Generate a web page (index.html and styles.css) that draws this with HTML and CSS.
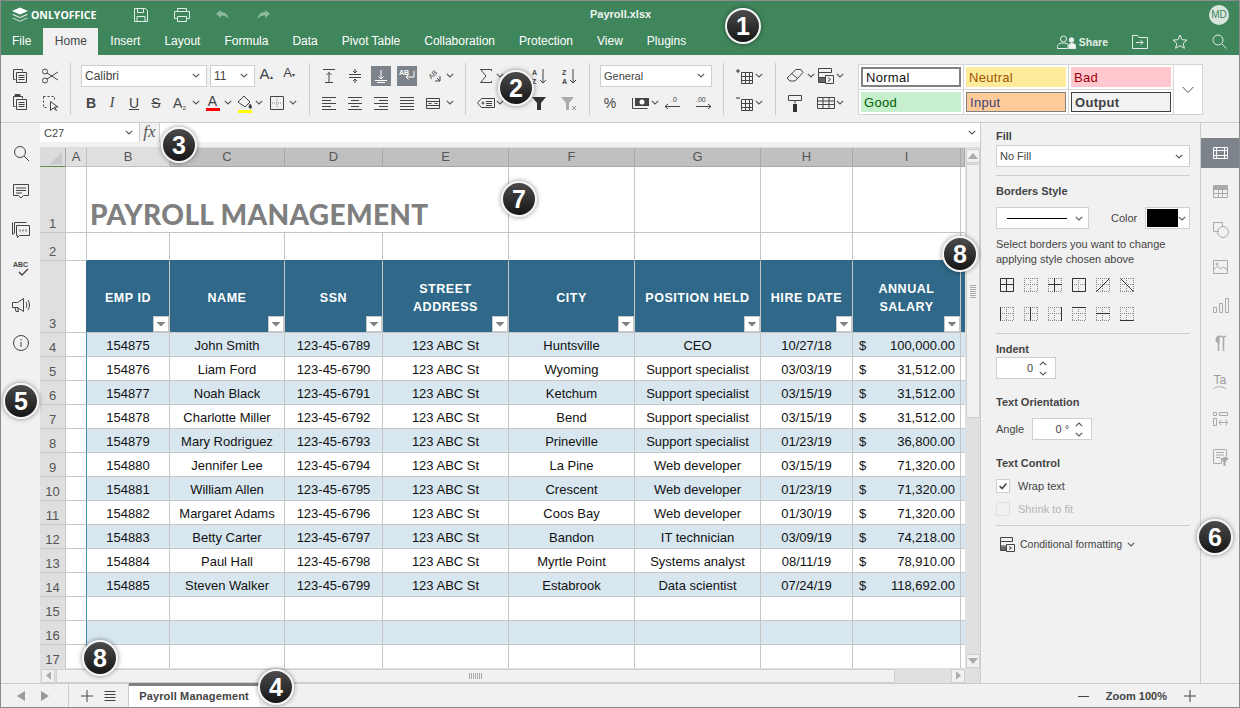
FILE: index.html
```html
<!DOCTYPE html>
<html lang="en">
<head>
  <meta charset="UTF-8">
  <title>Payroll.xlsx</title>
  <link rel="stylesheet" href="styles.css">
</head>
<body>

<!-- shared icon parts -->
<svg class="defs" aria-hidden="true">
  <symbol id="chev" viewBox="0 0 8 5"><path d="M.8 .8 4 4 7.2 .8" fill="none" stroke="#555" stroke-width="1.1"/></symbol>
  <symbol id="dots" viewBox="0 0 14 14"><path d="M0 .5h14M0 13.500h14M.5 0v14M13.500 0v14M6.500 0v14M0 6.500h14" fill="none" stroke="#8a8a8a" stroke-dasharray="1 1"/></symbol>
  <symbol id="tri-up" viewBox="0 0 10 6"><path d="M5 0l5 6H0z" fill="#aaa"/></symbol>
  <symbol id="tri-down" viewBox="0 0 10 6"><path d="M0 0h10L5 6z" fill="#aaa"/></symbol>
  <symbol id="filter" viewBox="0 0 16 16"><rect x=".5" y=".5" width="15" height="15" fill="#fff" stroke="#c6c6c6"/><path d="M3.500 6h9L8 10.500z" fill="#808080"/></symbol>
</svg>

<div class="app">

  <!-- Title bar -->
  <header class="topbar">
    <div class="title-row">
      <svg class="logo" viewBox="0 0 18 16"><path d="M9 .5l8 3.5-8 3.5L1 4z" fill="#fff"/><path d="M2.500 7 9 10l6.500-3 1.500.8L9 11.300 1 7.800z" fill="#d5e5db"/><path d="M2.500 10.500 9 13.500l6.500-3 1.500.8L9 15 1 11.300z" fill="#a9cbb6"/></svg>
      <span class="brand">ONLYOFFICE</span>
      <svg class="ic-top save" viewBox="0 0 16 16"><path d="M1.500 1.500h11l2 2v11h-13zM4.500 1.500v4h6v-4M4 14.500v-5h8v5" /></svg>
      <svg class="ic-top print" viewBox="0 0 18 16"><path d="M4.500 4.500v-3h9v3M4.500 11.500h-3v-7h15v7h-3M4.500 9.500h9v5h-9z"/></svg>
      <svg class="ic-top undo off" viewBox="0 0 16 12"><path d="M6 1 1 5l5 4V6.500c3 0 5.500 1 7.500 3.500-.5-4.500-3.500-7-7.500-7z" fill="#cfe0d5"/></svg>
      <svg class="ic-top redo off" viewBox="0 0 16 12"><path d="M10 1l5 4-5 4V6.500c-3 0-5.500 1-7.500 3.500.5-4.500 3.500-7 7.500-7z" fill="#cfe0d5"/></svg>
      <span class="doc-title">Payroll.xlsx</span>
      <span class="avatar">MD</span>
    </div>
    <div class="tab-row">
      <nav class="tabs">
        <a>File</a><a class="on">Home</a><a>Insert</a><a>Layout</a><a>Formula</a><a>Data</a><a>Pivot Table</a><a>Collaboration</a><a>Protection</a><a>View</a><a>Plugins</a>
      </nav>
      <div class="top-actions">
        <svg class="ic-top share-ic" viewBox="0 0 20 14"><circle cx="6.500" cy="4" r="3"/><path d="M.5 13.500v-2c0-2 2-3.500 6-3.500 2 0 3.500.5 4.500 1.500v4z"/><circle cx="14.500" cy="5" r="2.300" fill="#eef4f0"/><path d="M12 13.500v-3.500c0-1 1-1.500 2.500-1.500h1c2 0 3 1 3 2.500v2.500z" fill="#eef4f0"/></svg>
        <span class="share">Share</span>
        <svg class="ic-top move" viewBox="0 0 16 14"><path d="M.5 13.500v-13h5l1.500 2h8.500v11zM4 7.500h7M8.500 5l2.500 2.500L8.500 10"/></svg>
        <svg class="ic-top star" viewBox="0 0 16 15"><path d="M8 1l2 4.700 5 .4-3.800 3.300 1.200 4.900L8 11.700l-4.400 2.600 1.200-4.900L1 6.100l5-.4z"/></svg>
        <svg class="ic-top find" viewBox="0 0 15 15"><circle cx="6" cy="6" r="5"/><path d="M9.800 9.800l4.700 4.700"/></svg>
      </div>
    </div>
  </header>

  <!-- Ribbon -->
  <section class="ribbon">
    <div class="group g1">
      <div class="row">
        <span class="tool w30"><svg class="ic" viewBox="0 0 20 20"><path d="M3.500 3.500h9v2M3.500 3.500v10h2M6.500 6.500h10v10h-10zM8.500 9.500h6M8.500 11.500h6M8.500 13.500h6"/></svg></span>
        <span class="tool w30"><svg class="ic" viewBox="0 0 20 20"><circle cx="5" cy="5.500" r="2.500"/><circle cx="5" cy="14.500" r="2.500"/><path d="M7 7l11 7M7 13l11-7"/></svg></span>
      </div>
      <div class="row">
        <span class="tool w30"><svg class="ic" viewBox="0 0 20 20"><path d="M3.500 3.500h9v2M3.500 3.500v10h2M6.500 6.500h10v10h-10zM8.500 9.500h6M8.500 11.500h6M8.500 13.500h6"/><path d="M5 1.500h5v2H5z" fill="#444"/></svg></span>
        <span class="tool w30"><svg class="ic" viewBox="0 0 20 20"><path d="M3.500 3.500h11v5M3.500 3.500v11h5" stroke-dasharray="2 2"/><path d="M10.500 8.500l0 9 2.500-2.500 3.500 2.500-2-3.500h3.500z"/></svg></span>
      </div>
    </div>
    <i class="sep"></i>

    <div class="group g2">
      <div class="row">
        <div class="select font-name"><span>Calibri</span><svg class="chev"><use href="#chev"/></svg></div>
        <div class="select font-size"><span>11</span><svg class="chev"><use href="#chev"/></svg></div>
        <span class="tool w22 grow">A<sup>▴</sup></span>
        <span class="tool w22 ml1 shrink">A<sup>▾</sup></span>
      </div>
      <div class="row">
        <span class="tool w20 fmt bold">B</span>
        <span class="tool w22 fmt ital">I</span>
        <span class="tool w22 fmt und">U</span>
        <span class="tool w22 fmt strike">S</span>
        <span class="tool w25 fmt">A<small>₂</small></span><svg class="chev"><use href="#chev"/></svg>
        <span class="tool w23 ml1 fmt"><b class="color-a red">A</b></span><svg class="chev"><use href="#chev"/></svg>
        <span class="tool w20 ml3"><svg class="ic" viewBox="0 0 20 20"><path d="M3 9l6-6 6 6-5 5z"/><path d="M15 11c1 1.500 1.500 2 1.500 3a1.200 1.200 0 0 1-2.500 0c0-1 .5-1.500 1-3z" fill="#444"/><rect x="3" y="17" width="14" height="3" fill="#ff0" stroke="none"/></svg></span><svg class="chev"><use href="#chev"/></svg>
        <span class="tool w24 ml2"><svg class="ic" viewBox="0 0 20 20"><path d="M3.500 3.500h13v13h-13z"/><path d="M10 5v10M5 10h10" stroke="#888" stroke-dasharray="1 1"/></svg></span><svg class="chev"><use href="#chev"/></svg>
      </div>
    </div>
    <i class="sep"></i>

    <div class="group g3">
      <div class="row">
        <span class="tool w26"><svg class="ic" viewBox="0 0 20 20"><path d="M4 3.500h12M10 16V6.500M7.500 9 10 6.500 12.500 9M6 16.500h8" /></svg></span>
        <span class="tool w26"><svg class="ic" viewBox="0 0 20 20"><path d="M4 8.500h12M4 11.500h12M10 3v4M8 5l2 2 2-2M10 17v-4M8 15l2-2 2 2"/></svg></span>
        <span class="tool w26"><span class="active"><svg class="ic wht" viewBox="0 0 20 20"><path d="M10 4v9M7.500 10.500 10 13l2.500-2.500M4 14.500h12M6 16.500h8"/></svg></span></span>
        <span class="tool w26"><span class="active"><svg class="ic wht" viewBox="0 0 20 20"><text x="2" y="9" class="mini wt">AB</text><path d="M17 5v6h-8M11.500 8.500 9 11l2.500 2.500"/></svg></span></span>
        <span class="tool w26"><svg class="ic" viewBox="0 0 20 20"><text x="6" y="12" class="mini" transform="rotate(-45 9 10)">AB</text><path d="M12 15h5v-5M17 15l-3-3"/></svg></span><svg class="chev"><use href="#chev"/></svg>
      </div>
      <div class="row">
        <span class="tool w26"><svg class="ic" viewBox="0 0 20 20"><path d="M3 4.500h14M3 7.500h9M3 10.500h14M3 13.500h9M3 16.500h14"/></svg></span>
        <span class="tool w26"><svg class="ic" viewBox="0 0 20 20"><path d="M3 4.500h14M6 7.500h8M3 10.500h14M6 13.500h8M3 16.500h14"/></svg></span>
        <span class="tool w26"><svg class="ic" viewBox="0 0 20 20"><path d="M3 4.500h14M8 7.500h9M3 10.500h14M8 13.500h9M3 16.500h14"/></svg></span>
        <span class="tool w26"><svg class="ic" viewBox="0 0 20 20"><path d="M3 4.500h14M3 7.500h14M3 10.500h14M3 13.500h14M3 16.500h14"/></svg></span>
        <span class="tool w26"><svg class="ic" viewBox="0 0 20 20"><path d="M3.500 5.500h13v10h-13zM3.500 8.500h13M3.500 12.500h13M5.500 10.500h3M11.500 10.500h3"/></svg></span><svg class="chev"><use href="#chev"/></svg>
      </div>
    </div>
    <i class="sep"></i>

    <div class="group g4">
      <div class="row">
        <span class="tool w20"><svg class="ic" viewBox="0 0 20 20"><path d="M15.500 5V3.500h-11L10 10l-5.500 6.500h11V15"/></svg></span><svg class="chev"><use href="#chev"/></svg>
        <span class="tool w20 ml25"><svg class="ic" viewBox="0 0 20 20"><text x="3" y="9" class="mini bd">A</text><text x="3" y="18" class="mini bd">Z</text><path d="M14 3v14M11 14l3 3 3-3"/></svg></span>
        <span class="tool w20 ml10"><svg class="ic" viewBox="0 0 20 20"><text x="3" y="9" class="mini bd">Z</text><text x="3" y="18" class="mini bd">A</text><path d="M14 3v14M11 14l3 3 3-3"/></svg></span>
      </div>
      <div class="row">
        <span class="tool w20"><svg class="ic" viewBox="0 0 20 20"><path d="M5.500 5.500h13v9h-13L1.500 10z"/><path d="M10 8.500h6M10 10.500h6M10 12.500h6"/><circle cx="7" cy="10" r="1"/></svg></span><svg class="chev"><use href="#chev"/></svg>
        <span class="tool w20 ml25"><svg class="ic" viewBox="0 0 20 20"><path d="M3 4h14l-5 6v7h-4v-7z" fill="#333" stroke="none"/></svg></span>
        <span class="tool w20 ml10"><svg class="ic" viewBox="0 0 20 20"><path d="M2 4h13l-5 6v7H7v-7z" fill="#aaa" stroke="none"/><path d="M13 13l4 4M17 13l-4 4" stroke="#999"/></svg></span>
      </div>
    </div>
    <i class="sep"></i>

    <div class="group g5">
      <div class="row">
        <div class="select fmt-general"><span>General</span><svg class="chev"><use href="#chev"/></svg></div>
      </div>
      <div class="row">
        <span class="tool w20 pct">%</span>
        <span class="tool w20 ml10"><svg class="ic" viewBox="0 0 20 20"><rect x="5" y="5" width="14" height="8" fill="#444" stroke="none"/><circle cx="12" cy="9" r="2.500" fill="#fff" stroke="none"/><path d="M2.500 5v10.500h15"/></svg></span><svg class="chev ml1"><use href="#chev"/></svg>
        <span class="tool w20 ml3"><svg class="ic" viewBox="0 0 20 20"><text x="9" y="9" class="mini">.0</text><path d="M18 13.500H3M6 11l-3 2.500L6 16"/></svg></span>
        <span class="tool w20 ml11"><svg class="ic" viewBox="0 0 20 20"><text x="3" y="9" class="mini">.00</text><path d="M3 13.500h15M15 11l3 2.500L15 16"/></svg></span>
      </div>
    </div>
    <i class="sep"></i>

    <div class="group g6">
      <div class="row">
        <span class="tool w20"><svg class="ic" viewBox="0 0 20 20"><path d="M3 3v4M1 5h4" stroke="#333"/><path d="M6.500 6.500h11v11h-11zM6.500 10.500h11M6.500 14.500h11M10.500 6.500v11M14.500 6.500v11"/></svg></span><svg class="chev"><use href="#chev"/></svg>
      </div>
      <div class="row">
        <span class="tool w20"><svg class="ic" viewBox="0 0 20 20"><path d="M1 5h4" stroke="#333"/><path d="M6.500 6.500h11v11h-11zM6.500 10.500h11M6.500 14.500h11M10.500 6.500v11M14.500 6.500v11"/></svg></span><svg class="chev"><use href="#chev"/></svg>
      </div>
    </div>
    <i class="sep"></i>

    <div class="group g7">
      <div class="row">
        <span class="tool w20"><svg class="ic" viewBox="0 0 20 20"><path d="M2 12 11 3.500h5l2 3-8 8.500H5zM6.500 7.500l6 5"/></svg></span><svg class="chev ml2"><use href="#chev"/></svg>
        <span class="tool w20 ml1"><svg class="ic" viewBox="0 0 20 20"><path d="M2.500 2.500h13v4h-13zM2.500 6.500v10h7M2.500 11.500h7"/><rect x="3" y="12" width="6" height="4" fill="#666" stroke="none"/><path d="M9.500 9.500h8v8h-8zM12 11.500l2.500 2-2.500 2"/></svg></span><svg class="chev"><use href="#chev"/></svg>
      </div>
      <div class="row">
        <span class="tool w20"><svg class="ic" viewBox="0 0 20 20"><path d="M3.500 2.500h13v5h-13zM10 7.500v3"/><rect x="8" y="11" width="4" height="8" fill="#333" stroke="none"/></svg></span>
        <span class="tool w20 ml11"><svg class="ic" viewBox="0 0 20 20"><path d="M1.500 4.500h17v11h-17zM1.500 8h17M1.500 11.500h17M7 4.500v11M13 4.500v11"/></svg></span><svg class="chev"><use href="#chev"/></svg>
      </div>
    </div>

    <div class="gallery">
      <div class="style"><span class="st-normal">Normal</span></div>
      <div class="style"><span class="st-neutral">Neutral</span></div>
      <div class="style"><span class="st-bad">Bad</span></div>
      <div class="more"><svg viewBox="0 0 12 8"><path d="M.7 1 6 6.500 11.300 1" fill="none" stroke="#555"/></svg></div>
      <div class="style"><span class="st-good">Good</span></div>
      <div class="style"><span class="st-input">Input</span></div>
      <div class="style"><span class="st-output">Output</span></div>
    </div>
  </section>

  <div class="main">

    <!-- Left toolbar -->
    <aside class="sidebar left">
      <svg class="ic" viewBox="0 0 20 20"><circle cx="9" cy="9" r="5.500"/><path d="M13 13l5 5"/></svg>
      <svg class="ic" viewBox="0 0 20 20"><path d="M2.500 3.500h15v11h-5L10 17l-2.500-2.500h-5zM5 7h10M5 9.500h10M5 12h6"/></svg>
      <svg class="ic" viewBox="0 0 20 20"><path d="M3.500 14V3.500h12M1.500 3.500v12l2-1.500"/><path d="M5.500 6.500h13v10h-10l-2 2v-2h-1z"/><path d="M8.500 11.500h1M11.500 11.500h1M14.500 11.500h1" stroke-width="2"/></svg>
      <svg class="ic" viewBox="0 0 20 20"><text x="2" y="10" class="mini bd">ABC</text><path d="M8 15l3 3 6-6" stroke-width="1.400"/></svg>
      <svg class="ic" viewBox="0 0 20 20"><path d="M1.500 7.500h5l6-4v13l-6-4h-5zM4 12.500l1 4h2.500l-1-4M15 7c1 2 1 4 0 6M17 5c2 3 2 7 0 10"/></svg>
      <svg class="ic" viewBox="0 0 20 20"><circle cx="10" cy="10" r="7.500"/><path d="M10 9v5M10 6v1.500"/></svg>
    </aside>

    <!-- Sheet -->
    <div class="center">
      <div class="formula">
        <div class="name-box"><span>C27</span><svg class="chev"><use href="#chev"/></svg></div>
        <div class="fx">fx</div>
        <div class="fx-input"><svg class="chev"><use href="#chev"/></svg></div>
      </div>

      <div class="sheet-wrap">
        <div class="sheet-col">
          <div class="sheet">
            <table>
              <colgroup>
                <col class="c-h"><col class="c-a"><col class="c-b"><col class="c-c"><col class="c-d"><col class="c-e"><col class="c-f"><col class="c-g"><col class="c-h2"><col class="c-i"><col class="c-j">
              </colgroup>
              <tr class="cols">
                <th class="corner"><svg viewBox="0 0 12 12"><path d="M12 0v12H0z" fill="#c8c8c8"/></svg></th>
                <th class="lite">A</th><th class="lite">B</th><th>C</th><th>D</th><th>E</th><th>F</th><th>G</th><th>H</th><th>I</th><th></th>
              </tr>
              <tr class="r-title">
                <th class="num">1</th><td></td>
                <td colspan="4" class="title">PAYROLL MANAGEMENT</td>
                <td></td><td></td><td></td><td></td><td></td>
              </tr>
              <tr class="r-gap">
                <th class="num">2</th><td></td><td></td><td></td><td></td><td></td><td></td><td></td><td></td><td></td><td></td>
              </tr>
              <tr class="r-head">
                <th class="num">3</th><td></td>
                <td class="hd">EMP ID<svg class="flt"><use href="#filter"/></svg></td>
                <td class="hd">NAME<svg class="flt"><use href="#filter"/></svg></td>
                <td class="hd">SSN<svg class="flt"><use href="#filter"/></svg></td>
                <td class="hd">STREET<br>ADDRESS<svg class="flt"><use href="#filter"/></svg></td>
                <td class="hd">CITY<svg class="flt"><use href="#filter"/></svg></td>
                <td class="hd">POSITION HELD<svg class="flt"><use href="#filter"/></svg></td>
                <td class="hd">HIRE DATE<svg class="flt"><use href="#filter"/></svg></td>
                <td class="hd">ANNUAL<br>SALARY<svg class="flt"><use href="#filter"/></svg></td>
                <td class="hd-end"></td>
              </tr>
              <tr class="odd"><th class="num">4</th><td></td><td>154875</td><td>John Smith</td><td>123-45-6789</td><td>123 ABC St</td><td>Huntsville</td><td>CEO</td><td>10/27/18</td><td class="money"><div><span>$</span><span>100,000.00</span></div></td><td></td></tr>
              <tr><th class="num">5</th><td></td><td>154876</td><td>Liam Ford</td><td>123-45-6790</td><td>123 ABC St</td><td>Wyoming</td><td>Support specialist</td><td>03/03/19</td><td class="money"><div><span>$</span><span>31,512.00</span></div></td><td></td></tr>
              <tr class="odd"><th class="num">6</th><td></td><td>154877</td><td>Noah Black</td><td>123-45-6791</td><td>123 ABC St</td><td>Ketchum</td><td>Support specialist</td><td>03/15/19</td><td class="money"><div><span>$</span><span>31,512.00</span></div></td><td></td></tr>
              <tr><th class="num">7</th><td></td><td>154878</td><td>Charlotte Miller</td><td>123-45-6792</td><td>123 ABC St</td><td>Bend</td><td>Support specialist</td><td>03/15/19</td><td class="money"><div><span>$</span><span>31,512.00</span></div></td><td></td></tr>
              <tr class="odd"><th class="num">8</th><td></td><td>154879</td><td>Mary Rodriguez</td><td>123-45-6793</td><td>123 ABC St</td><td>Prineville</td><td>Support specialist</td><td>01/23/19</td><td class="money"><div><span>$</span><span>36,800.00</span></div></td><td></td></tr>
              <tr><th class="num">9</th><td></td><td>154880</td><td>Jennifer Lee</td><td>123-45-6794</td><td>123 ABC St</td><td>La Pine</td><td>Web developer</td><td>03/15/19</td><td class="money"><div><span>$</span><span>71,320.00</span></div></td><td></td></tr>
              <tr class="odd"><th class="num">10</th><td></td><td>154881</td><td>William Allen</td><td>123-45-6795</td><td>123 ABC St</td><td>Crescent</td><td>Web developer</td><td>01/23/19</td><td class="money"><div><span>$</span><span>71,320.00</span></div></td><td></td></tr>
              <tr><th class="num">11</th><td></td><td>154882</td><td>Margaret Adams</td><td>123-45-6796</td><td>123 ABC St</td><td>Coos Bay</td><td>Web developer</td><td>01/30/19</td><td class="money"><div><span>$</span><span>71,320.00</span></div></td><td></td></tr>
              <tr class="odd"><th class="num">12</th><td></td><td>154883</td><td>Betty Carter</td><td>123-45-6797</td><td>123 ABC St</td><td>Bandon</td><td>IT technician</td><td>03/09/19</td><td class="money"><div><span>$</span><span>74,218.00</span></div></td><td></td></tr>
              <tr><th class="num">13</th><td></td><td>154884</td><td>Paul Hall</td><td>123-45-6798</td><td>123 ABC St</td><td>Myrtle Point</td><td>Systems analyst</td><td>08/11/19</td><td class="money"><div><span>$</span><span>78,910.00</span></div></td><td></td></tr>
              <tr class="odd"><th class="num">14</th><td></td><td>154885</td><td>Steven Walker</td><td>123-45-6799</td><td>123 ABC St</td><td>Estabrook</td><td>Data scientist</td><td>07/24/19</td><td class="money"><div><span>$</span><span>118,692.00</span></div></td><td></td></tr>
              <tr><th class="num">15</th><td></td><td></td><td></td><td></td><td></td><td></td><td></td><td></td><td></td><td></td></tr>
              <tr class="odd"><th class="num">16</th><td></td><td></td><td></td><td></td><td></td><td></td><td></td><td></td><td></td><td></td></tr>
              <tr><th class="num">17</th><td></td><td></td><td></td><td></td><td></td><td></td><td></td><td></td><td></td><td></td></tr>
            </table>
          </div>
          <div class="hscroll">
            <span class="sb-btn"><svg class="tri-l" viewBox="0 0 6 10"><path d="M6 0v10L0 5z" fill="#aaa"/></svg></span>
            <span class="hthumb"><i class="grip-h"></i></span>
            <span class="sb-btn"><svg class="tri-l" viewBox="0 0 6 10"><path d="M0 0v10l6-5z" fill="#aaa"/></svg></span>
          </div>
        </div>
        <div class="vscroll">
          <span class="sb-btn"><svg class="tri-v"><use href="#tri-up"/></svg></span>
          <span class="vthumb"><i class="grip-v"></i></span>
          <span class="sb-btn down"><svg class="tri-v"><use href="#tri-down"/></svg></span>
        </div>
      </div>
    </div>

    <!-- Cell settings -->
    <aside class="panel">
      <h4 class="lbl first">Fill</h4>
      <div class="select p-fill"><span>No Fill</span><svg class="chev"><use href="#chev"/></svg></div>
      <hr class="m8">

      <h4 class="lbl m9">Borders Style</h4>
      <div class="border-row">
        <div class="select p-line"><i class="line"></i><svg class="chev"><use href="#chev"/></svg></div>
        <span class="color-lbl">Color</span>
        <div class="select p-color"><i class="swatch"></i><svg class="chev"><use href="#chev"/></svg></div>
      </div>
      <p class="hint">Select borders you want to change applying style chosen above</p>

      <div class="border-icons first-row">
        <span><svg viewBox="0 0 14 14"><path d="M.5 .5h13v13H.5zM6.500 .5v13M.5 6.500h13"/></svg></span>
        <span><svg viewBox="0 0 14 14"><use href="#dots"/></svg></span>
        <span><svg viewBox="0 0 14 14"><use href="#dots"/><path d="M6.500 0v14M0 6.500h14"/></svg></span>
        <span><svg viewBox="0 0 14 14"><use href="#dots"/><path d="M.5 .5h13v13H.5z"/></svg></span>
        <span><svg viewBox="0 0 14 14"><use href="#dots"/><path d="M.5 13.500l13-13"/></svg></span>
        <span><svg viewBox="0 0 14 14"><use href="#dots"/><path d="M.5 .5l13 13"/></svg></span>
      </div>
      <div class="border-icons">
        <span><svg viewBox="0 0 14 14"><use href="#dots"/><path d="M.5 0v14"/></svg></span>
        <span><svg viewBox="0 0 14 14"><use href="#dots"/><path d="M6.500 0v14"/></svg></span>
        <span><svg viewBox="0 0 14 14"><use href="#dots"/><path d="M13.500 0v14"/></svg></span>
        <span><svg viewBox="0 0 14 14"><use href="#dots"/><path d="M0 .5h14"/></svg></span>
        <span><svg viewBox="0 0 14 14"><use href="#dots"/><path d="M0 6.500h14"/></svg></span>
        <span><svg viewBox="0 0 14 14"><use href="#dots"/><path d="M0 13.500h14"/></svg></span>
      </div>
      <hr class="m9">

      <h4 class="lbl m9">Indent</h4>
      <div class="spin indent"><span>0</span><em><svg class="chev up"><use href="#chev"/></svg><svg class="chev"><use href="#chev"/></svg></em></div>

      <h4 class="lbl m17">Text Orientation</h4>
      <div class="angle-row">
        <span>Angle</span>
        <div class="spin angle"><span>0 °</span><em><svg class="chev up"><use href="#chev"/></svg><svg class="chev"><use href="#chev"/></svg></em></div>
      </div>

      <h4 class="lbl m17">Text Control</h4>
      <div class="check m9"><i class="box"><svg viewBox="0 0 14 14"><path d="M3 7l3 3 5-6" fill="none" stroke="#444" stroke-width="1.800"/></svg></i>Wrap text</div>
      <div class="check off m9"><i class="box"></i>Shrink to fit</div>
      <hr class="m9">

      <div class="cond">
        <svg class="ic" viewBox="0 0 20 20"><path d="M3.500 3.500h12v4h-12zM3.500 7.500v9h6M3.500 12h6"/><rect x="4" y="12.500" width="5" height="3.500" fill="#666" stroke="none"/><path d="M9.500 10.500h8v7h-8zM12 12.500l2.500 1.500-2.500 1.500"/></svg>
        <span>Conditional formatting</span>
        <svg class="chev"><use href="#chev"/></svg>
      </div>
    </aside>

    <!-- Right toolbar -->
    <aside class="sidebar right">
      <span class="rt on"><svg class="ic wht" viewBox="0 0 20 20"><path d="M3.500 4.500h14v11h-14zM3.500 7.500h14M3.500 12.500h14M6.500 4.500v11M14.500 4.500v11"/></svg></span>
      <span class="rt"><svg class="ic" viewBox="0 0 20 20"><path d="M3.500 4.500h14v12h-14zM3.500 8.500h14M3.500 12.500h14M8.500 4.500v12M12.500 4.500v12"/><path d="M3.500 5.500h14v3h-14z" fill="#aaa"/></svg></span>
      <span class="rt"><svg class="ic" viewBox="0 0 20 20"><path d="M9 12.500H3.500v-9h9V8"/><circle cx="13" cy="13" r="5.500"/></svg></span>
      <span class="rt"><svg class="ic" viewBox="0 0 20 20"><path d="M3.500 3.500h14v13h-14zM3.500 13l4-4 3 3 3-2 4 3"/><circle cx="7" cy="7" r="1"/></svg></span>
      <span class="rt"><svg class="ic" viewBox="0 0 20 20"><path d="M3.500 12.500h3v5h-3zM9.500 8.500h3v9h-3zM15.500 3.500h3v14h-3z"/></svg></span>
      <span class="rt"><svg class="ic" viewBox="0 0 20 20"><path d="M8.500 18V3.500h5M13.500 3.500V18M16 3.500h-2" stroke-width="1.600"/><path d="M9 3H8a4 4 0 0 0 0 7h1z" fill="#aaa"/></svg></span>
      <span class="rt"><svg class="ic" viewBox="0 0 20 20"><text x="3.500" y="13" class="mini big">Ta</text><path d="M3 18c3-3 9-3 13 0"/></svg></span>
      <span class="rt"><svg class="ic" viewBox="0 0 20 20"><path d="M3.500 3.500h3v3h-3zM9.500 3.500h8v3h-8zM3.500 9.500h3v7h-3zM9 13.500h9M15.500 10.500l2 3-2 3M11 11l-2 2.500 2 2.500"/></svg></span>
      <span class="rt"><svg class="ic" viewBox="0 0 20 20"><path d="M3.500 2.500h13v8h-3l-2 2v4h-8zM6 5.500h8M6 8h8M6 10.500h4"/><path d="M10 11h9l-3.500 4v4h-2v-4z" fill="#aaa" stroke="none"/></svg></span>
    </aside>
  </div>

  <!-- Status bar -->
  <footer class="status">
    <div class="nav-arrows">
      <svg viewBox="0 0 8 10"><path d="M8 0v10L0 5z" fill="#999"/></svg>
      <svg viewBox="0 0 8 10"><path d="M0 0v10l8-5z" fill="#999"/></svg>
    </div>
    <div class="sheet-tools">
      <svg class="ic" viewBox="0 0 14 14"><path d="M7 1v12M1 7h12"/></svg>
      <svg class="ic" viewBox="0 0 14 14"><path d="M1.500 2.500h11M1.500 5.500h11M1.500 8.500h11M1.500 11.500h11"/></svg>
    </div>
    <div class="sheet-tab">Payroll Management</div>
    <div class="zoom">
      <svg class="ic" viewBox="0 0 14 14"><path d="M1 7.500h11"/></svg>
      <span>Zoom 100%</span>
      <svg class="ic" viewBox="0 0 14 14"><path d="M7 1v12M1 7h12"/></svg>
    </div>
  </footer>

  <!-- Callout badges -->
  <span class="badge b1">1</span>
  <span class="badge b2">2</span>
  <span class="badge b3">3</span>
  <span class="badge b4">4</span>
  <span class="badge b5">5</span>
  <span class="badge b6">6</span>
  <span class="badge b7">7</span>
  <span class="badge b8a">8</span>
  <span class="badge b8b">8</span>
</div>

</body>
</html>
```

FILE: styles.css
```css
* {
  box-sizing: border-box;
}

body {
  margin: 0;
  font-family: "Liberation Sans", Arial, sans-serif;
  font-size: 11px;
  color: #444;
  overflow: hidden;
}

.defs {
  position: absolute;
  width: 0;
  height: 0;
}

.app {
  position: relative;
  width: 1240px;
  height: 708px;
  border: 1px solid #8c8c8c;
  background: #f1f1f1;
  display: flex;
  flex-direction: column;
  overflow: hidden;
}

/* Title bar */
.topbar {
  background: #40865c;
  color: #fff;
  height: 54px;
  flex: none;
}

.title-row {
  height: 27px;
  display: flex;
  align-items: center;
  position: relative;
  padding-left: 10px;
}

.logo {
  width: 18px;
  height: 16px;
}

.brand {
  font-family: "Open Sans", sans-serif;
  font-weight: 700;
  font-size: 10.500px;
  margin-left: 2px;
  width: 67px;
  white-space: nowrap;
}

.ic-top {
  fill: none;
  stroke: #e3eee7;
  stroke-width: 1;
  flex: none;
}

.save {
  width: 16px;
  height: 16px;
  margin-left: 35px;
}

.print {
  width: 18px;
  height: 16px;
  margin-left: 24px;
}

.undo {
  width: 16px;
  height: 12px;
  margin-left: 24px;
  stroke: none;
  opacity: .55;
}

.redo {
  width: 16px;
  height: 12px;
  margin-left: 24px;
  stroke: none;
  opacity: .55;
}

.doc-title {
  position: absolute;
  left: 589px;
  top: 7px;
  font-size: 11px;
  font-weight: bold;
  color: #eef4f0;
}

.avatar {
  margin-left: auto;
  margin-right: 10px;
  width: 20px;
  height: 20px;
  border-radius: 50%;
  background: #d8e4dc;
  color: #40865c;
  font-size: 10px;
  line-height: 20px;
  text-align: center;
}

.tab-row {
  height: 27px;
  display: flex;
  justify-content: space-between;
}

.tabs {
  display: flex;
}

.tabs a {
  padding: 0 12px;
  font-size: 12px;
  line-height: 27px;
  color: #fff;
}

.tabs a:first-child {
  padding-left: 11px;
}

.tabs a.on {
  background: #f1f1f1;
  color: #444;
  padding: 0 11.500px;
}

.top-actions {
  display: flex;
  align-items: center;
  padding-right: 12px;
}

.share-ic {
  width: 20px;
  height: 14px;
}

.share {
  font-weight: bold;
  font-size: 10.500px;
  margin-left: 2px;
  color: #e3eee7;
}

.move {
  width: 16px;
  height: 14px;
  margin-left: 24px;
}

.star {
  width: 16px;
  height: 15px;
  margin-left: 24px;
}

.find {
  width: 15px;
  height: 15px;
  margin-left: 24px;
}

/* Ribbon */
.ribbon {
  height: 68px;
  flex: none;
  display: flex;
  align-items: flex-start;
  padding-top: 8px;
  border-bottom: 1px solid #ccc;
}

.sep {
  width: 1px;
  height: 52px;
  background: #ccc;
  flex: none;
}

.group {
  flex: none;
  margin-top: -1px;
}

.row {
  display: flex;
  align-items: center;
  height: 27px;
}

.g1 { width: 69px; padding-left: 4px; }
.g2 { width: 238px; padding-left: 10px; }
.g3 { width: 155px; padding-left: 6px; }
.g4 { width: 123px; padding-left: 10px; }
.g5 { width: 133px; padding-left: 10px; }
.g6 { width: 51px; padding-left: 11px; }
.g7 { width: 82px; padding-left: 9px; }

.tool {
  display: flex;
  align-items: center;
  justify-content: center;
  flex: none;
  height: 22px;
}

.w20 { width: 20px; }
.w22 { width: 22px; }
.w23 { width: 23px; }
.w24 { width: 24px; }
.w25 { width: 25px; }
.w26 { width: 26px; }
.w30 { width: 30px; }
.ml1 { margin-left: 1px; }
.ml2 { margin-left: 2px; }
.ml3 { margin-left: 3px; }
.ml10 { margin-left: 10px; }
.ml11 { margin-left: 11px; }
.ml25 { margin-left: 25px; }

.ic {
  width: 20px;
  height: 20px;
  fill: none;
  stroke: #444;
  stroke-width: 1;
  flex: none;
}

.wht {
  stroke: #fff;
}

.mini {
  font: 7px "Liberation Sans", sans-serif;
  fill: #444;
  stroke: none;
}

.mini.bd {
  font-weight: bold;
}

.mini.wt {
  fill: #fff;
  font-weight: bold;
}

.mini.big {
  font-size: 12px;
  fill: #999;
}

.chev {
  width: 8px;
  height: 5px;
  flex: none;
}

.active {
  width: 20px;
  height: 20px;
  background: #7c838a;
  display: block;
}

.select {
  display: flex;
  align-items: center;
  justify-content: space-between;
  height: 22px;
  background: #fff;
  border: 1px solid #cfcfcf;
  padding: 0 6px 0 3px;
  font-size: 11px;
  flex: none;
}

.font-name { width: 126px; font-size: 12px; }
.font-size { width: 45px; margin-left: 3px; font-size: 12px; padding-left: 3px; }
.fmt-general { width: 112px; }

.grow, .shrink {
  font-size: 15px;
  align-items: baseline;
}

.shrink {
  font-size: 13px;
}

.grow sup, .shrink sup {
  font-size: 6px;
  line-height: 0;
}

.fmt {
  font-size: 14px;
  color: #444;
}

.fmt small {
  font-size: 10px;
  padding-top: 5px;
}

.bold { font-weight: bold; }
.ital { font-style: italic; font-family: "Liberation Serif", serif; }
.und { text-decoration: underline; }
.strike { text-decoration: line-through; }

.color-a {
  font-weight: normal;
  border-bottom: 3px solid #f00;
  line-height: 14px;
  width: 14px;
  text-align: center;
}

.pct {
  font-size: 14px;
}

/* Cell style gallery */
.gallery {
  margin-top: 1px;
  width: 345px;
  height: 51px;
  display: grid;
  grid-template-columns: 104px 104px 104px 28px;
  grid-template-rows: 24px 24px;
  gap: 1px;
  padding: 1px;
  background: #d4d4d4;
  flex: none;
}

.style {
  background: #fff;
  padding: 2px;
  display: flex;
  font-size: 13px;
  letter-spacing: .3px;
}

.style span {
  flex: 1;
  line-height: 22px;
  padding-left: 3px;
  height: 20px;
}

.style .st-normal { border: 2px solid #808080; color: #111; line-height: 17px; }
.style .st-neutral { background: #ffeb9c; color: #9c5700; }
.style .st-bad { background: #ffc7ce; color: #9c0006; }
.style .st-good { background: #c6efce; color: #006100; }
.style .st-input { background: #fc9; color: #3f3f76; border: 1px solid #7f7f7f; line-height: 20px; }
.style .st-output { background: #f2f2f2; color: #3f3f3f; border: 1px solid #3f3f3f; font-weight: bold; line-height: 20px; }

.more {
  grid-column: 4;
  grid-row: 1 / 3;
  background: #fff;
  display: flex;
  align-items: center;
  justify-content: center;
}

.more svg {
  width: 12px;
  height: 8px;
}

/* Main area */
.main {
  flex: none;
  height: 560px;
  display: flex;
}

.sidebar {
  width: 39px;
  flex: none;
  display: flex;
  flex-direction: column;
  align-items: center;
}

.sidebar.left {
  padding-top: 20px;
  gap: 18px;
}

.sidebar.right {
  border-left: 1px solid #ccc;
  width: 39px;
  padding-top: 15px;
}

.rt {
  width: 100%;
  height: 38px;
  display: flex;
  align-items: center;
  justify-content: center;
}

.rt .ic {
  stroke: #aaa;
}

.rt .wht {
  stroke: #fff;
}

.rt.on {
  background: #7c838a;
  height: 30px;
  margin-bottom: 4px;
}

.center {
  width: 940px;
  flex: none;
  display: flex;
  flex-direction: column;
}

.formula {
  height: 25px;
  flex: none;
  display: flex;
  padding-bottom: 5px;
  border-bottom: 1px solid #ddd;
  background: #f1f1f1;
}

.name-box {
  width: 99px;
  background: #fff;
  display: flex;
  align-items: center;
  justify-content: space-between;
  padding: 0 6px 0 4px;
  font-size: 11px;
}

.fx {
  width: 21px;
  border-left: 1px solid #ccc;
  border-right: 1px solid #ccc;
  font: italic 17px "Liberation Serif", serif;
  line-height: 18px;
  text-align: center;
  color: #555;
}

.fx-input {
  flex: 1;
  background: #fff;
  display: flex;
  justify-content: flex-end;
  align-items: center;
  padding-right: 4px;
}

.sheet-wrap {
  flex: 1;
  display: flex;
  min-height: 0;
}

.sheet-col {
  width: 925px;
  display: flex;
  flex-direction: column;
}

.sheet {
  height: 520px;
  flex: none;
  overflow: hidden;
  background: #fff;
}

table {
  table-layout: fixed;
  width: 925px;
  border-collapse: separate;
  border-spacing: 0;
  font-size: 13px;
  color: #111;
}

.c-h { width: 26px; }
.c-a { width: 21px; }
.c-b { width: 83px; }
.c-c { width: 115px; }
.c-d { width: 98px; }
.c-e { width: 126px; }
.c-f { width: 126px; }
.c-g { width: 126px; }
.c-h2 { width: 92px; }
.c-i { width: 108px; }
.c-j { width: 4px; }

td, th {
  padding: 0;
  border-right: 1px solid #c6c6c6;
  border-bottom: 1px solid #c6c6c6;
  height: 24px;
  text-align: center;
  white-space: nowrap;
}

td {
  vertical-align: bottom;
  line-height: 20px;
  padding-top: 3px;
}

tr td:nth-child(2) {
  border-right-color: #3d8bb5;
}

.r-title td:nth-child(2), .r-gap td:nth-child(2) {
  border-right-color: #c6c6c6;
}

.r-head td:nth-child(2) {
  border-right-color: #2f6888;
}

td:last-child {
  border-right: 0;
}

.cols th {
  height: 19px;
  background: #c0c0c0;
  color: #555;
  font-weight: normal;
  font-size: 13px;
  border-color: #a8a8a8;
  line-height: 16px;
}

.cols .lite {
  background: #dfdfdf;
  border-color: #c0c0c0;
}

.cols .corner {
  background: #dcdcdc;
  border-bottom: 1px solid #6e8a4c;
  position: relative;
}

.corner svg {
  position: absolute;
  right: 3px;
  bottom: 2px;
  width: 12px;
  height: 12px;
}

.num {
  background: #dfdfdf;
  color: #555;
  font-weight: normal;
  font-size: 13px;
  vertical-align: bottom;
  line-height: 17px;
}

.r-title td, .r-title th {
  height: 66px;
}

.r-gap td, .r-gap th {
  height: 28px;
}

/* header fill starts on the grid line above it */
.r-gap td:nth-child(n+3) {
  border-bottom-color: #2f6888;
}

.r-head td, .r-head th {
  height: 72px;
}

.r-title .title {
  font-family: Lato, sans-serif;
  font-weight: 900;
  font-size: 28px;
  letter-spacing: .35px;
  color: #7f7f7f;
  text-align: left;
  padding-left: 3px;
  line-height: 36px;
}

.hd {
  position: relative;
  background: #2f6888;
  color: #fff;
  font-weight: bold;
  font-size: 12.500px;
  letter-spacing: .55px;
  white-space: nowrap;
  vertical-align: middle;
  line-height: 18px;
  padding: 2px 0 0;
}

.hd-end {
  background: #2f6888;
}

.flt {
  position: absolute;
  right: 0;
  bottom: 0;
  width: 16px;
  height: 16px;
}

.odd td {
  background: #d7e6ef;
}

tr.odd td:nth-child(2) {
  background: #fff;
}

.money div {
  display: flex;
  justify-content: space-between;
  padding: 0 5px 0 6px;
}

/* Scrollbars */
.sb-btn {
  width: 14px;
  height: 14px;
  background: #f1f1f1;
  border: 1px solid #d0d0d0;
  display: flex;
  align-items: center;
  justify-content: center;
  flex: none;
}

.tri-v {
  width: 10px;
  height: 6px;
}

.tri-l {
  width: 5px;
  height: 9px;
}

.hscroll {
  flex: 1;
  background: #e0e0e0;
  display: flex;
  align-items: center;
  padding-left: 1px;
}

.hthumb {
  width: 840px;
  height: 14px;
  margin: 0 56px 0 1px;
  background: #f1f1f1;
  border: 1px solid #d0d0d0;
  display: flex;
  align-items: center;
  justify-content: center;
}

.grip-h {
  width: 14px;
  height: 6px;
  background: repeating-linear-gradient(90deg, #aaa 0 1px, transparent 1px 2px);
}

.vscroll {
  width: 15px;
  background: #e0e0e0;
  display: flex;
  flex-direction: column;
  padding: 1px 0 15px 1px;
}

.vthumb {
  width: 14px;
  height: 254px;
  margin-top: 1px;
  background: #f1f1f1;
  border: 1px solid #d0d0d0;
  display: flex;
  align-items: center;
  justify-content: center;
}

.grip-v {
  width: 6px;
  height: 14px;
  background: repeating-linear-gradient(0deg, #aaa 0 1px, transparent 1px 2px);
}

.sb-btn.down {
  margin-top: auto;
}

/* Settings panel */
.panel {
  width: 220px;
  flex: none;
  border-left: 1px solid #ccc;
  padding: 7px 10px 0 15px;
}

.panel hr {
  border: 0;
  border-top: 1px solid #ccc;
  margin-bottom: 0;
}

.lbl {
  margin: 0;
  font-size: 11px;
  font-weight: bold;
  line-height: 13px;
  color: #444;
}

.m8 { margin-top: 8px; }
.m9 { margin-top: 9px; }
.m17 { margin-top: 17px; }

.p-fill {
  margin-top: 2px;
  width: 194px;
  padding-left: 3px;
}

.border-row {
  margin-top: 9px;
  display: flex;
  align-items: center;
}

.p-line {
  width: 93px;
  padding: 0 5px 0 10px;
}

.line {
  width: 60px;
  height: 1px;
  background: #000;
}

.color-lbl {
  margin-left: 22px;
  width: 34px;
}

.p-color {
  width: 45px;
  padding: 0 3px 0 1px;
}

.swatch {
  width: 31px;
  height: 18px;
  background: #000;
}

.hint {
  margin: 8px 0 0;
  line-height: 15px;
  width: 180px;
}

.border-icons {
  display: flex;
  margin: 9px 0 0 -1px;
}

.border-icons.first-row {
  margin-top: 8px;
}

.border-icons span {
  width: 24px;
  height: 20px;
  display: flex;
  align-items: center;
  justify-content: center;
}

.border-icons svg {
  width: 14px;
  height: 14px;
  fill: none;
  stroke: #333;
  overflow: visible;
}

.spin {
  height: 22px;
  background: #fff;
  border: 1px solid #cfcfcf;
  display: flex;
  align-items: center;
  justify-content: flex-end;
}

.spin span {
  margin-right: 6px;
}

.spin em {
  display: flex;
  flex-direction: column;
  gap: 5px;
  width: 16px;
}

.chev.up {
  transform: rotate(180deg);
}

.indent {
  width: 60px;
  margin-top: 1px;
}

.angle-row {
  margin-top: 9px;
  display: flex;
  align-items: center;
}

.angle {
  width: 60px;
  margin-left: 8px;
}

.check {
  display: flex;
  align-items: center;
  height: 14px;
}

.box {
  width: 14px;
  height: 14px;
  background: #fff;
  border: 1px solid #cfcfcf;
  margin-right: 8px;
  display: block;
}

.box svg {
  display: block;
  width: 12px;
  height: 12px;
}

.check.off {
  color: #b4b4b4;
}

.check.off .box {
  background: #f1f1f1;
  border-color: #e0e0e0;
}

.cond {
  margin-top: 8px;
  display: flex;
  align-items: center;
  padding-left: 1px;
  height: 20px;
}

.cond span {
  margin: 0 5px 0 3px;
  font-size: 10.500px;
}

/* Status bar */
.status {
  flex: 1;
  display: flex;
  align-items: stretch;
  border-top: 1px solid #ccc;
  position: relative;
}

.nav-arrows {
  width: 68px;
  border-right: 1px solid #ccc;
  display: flex;
  align-items: center;
  padding-left: 16px;
  gap: 16px;
}

.nav-arrows svg {
  width: 8px;
  height: 10px;
}

.sheet-tools {
  width: 60px;
  border-right: 1px solid #ccc;
  display: flex;
  align-items: center;
  padding-left: 11px;
  gap: 9px;
}

.sheet-tools .ic, .zoom .ic {
  width: 14px;
  height: 14px;
}

.sheet-tab {
  width: 130px;
  background: #fff;
  border-top: 3px solid #808080;
  font-weight: bold;
  font-size: 11px;
  letter-spacing: .15px;
  line-height: 20px;
  text-align: center;
  margin-top: -1px;
}

.zoom {
  margin-left: auto;
  display: flex;
  align-items: center;
  padding-right: 42px;
  font-weight: bold;
  font-size: 11px;
  gap: 15px;
}

.zoom span {
  margin-right: 1px;
}

/* Callouts */
.badge {
  position: absolute;
  width: 36px;
  height: 36px;
  margin: -19px 0 0 -19px;
  border-radius: 50%;
  border: 2px solid #f4f4f4;
  background: linear-gradient(#4b4b4b, #161616);
  box-shadow: 0 0 5px rgba(0, 0, 0, .45);
  color: #fff;
  font-weight: bold;
  font-size: 25px;
  line-height: 32px;
  text-align: center;
}

.b1 { left: 743px; top: 26px; }
.b2 { left: 516px; top: 88px; }
.b3 { left: 179px; top: 145px; }
.b4 { left: 276px; top: 687px; }
.b5 { left: 21px; top: 401px; }
.b6 { left: 1215px; top: 537px; }
.b7 { left: 519px; top: 199px; }
.b8a { left: 960px; top: 254px; }
.b8b { left: 100px; top: 658px; }
```
